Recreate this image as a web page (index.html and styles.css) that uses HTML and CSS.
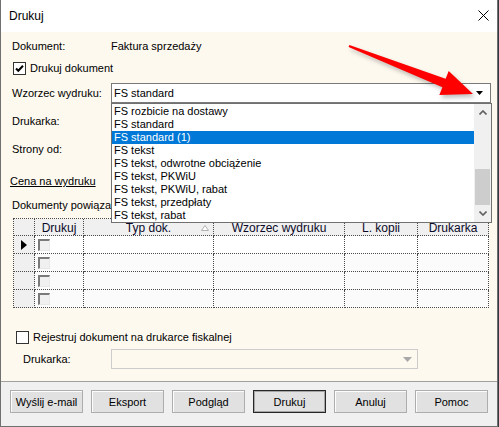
FILE: index.html
```html
<!DOCTYPE html>
<html>
<head>
<meta charset="utf-8">
<link rel="stylesheet" href="styles.css">
</head>
<body>
<div class="window">
  <div class="titlebar">
    <span class="title">Drukuj</span>
    <svg class="close" width="11" height="11" viewBox="0 0 11 11"><path d="M0.5 0.5 L10.5 10.5 M10.5 0.5 L0.5 10.5" stroke="#000" stroke-width="1" fill="none"/></svg>
  </div>
  <div class="content">
    <div class="row r1"><span class="label">Dokument:</span><span>Faktura sprzedaży</span></div>
    <div class="row r2"><span class="chk"><svg width="11" height="11" viewBox="0 0 11 11"><path d="M2 5.5 L4.3 7.8 L9 2.8" stroke="#000" stroke-width="2" fill="none"/></svg></span><span>Drukuj dokument</span></div>
    <div class="row r3"><span class="label">Wzorzec wydruku:</span>
      <div class="combo"><span class="combo-text">FS standard</span><svg class="carrow" width="7" height="4" viewBox="0 0 7 4"><path d="M0 0 H7 L3.5 4 Z" fill="#000"/></svg></div>
    </div>
    <div class="row r4"><span class="label">Drukarka:</span></div>
    <div class="row r5"><span class="label">Strony od:</span></div>
    <div class="row r6"><span class="link">Cena na wydruku</span></div>
    <div class="row r7"><span>Dokumenty powiązane</span></div>
    <div class="grid">
      <div class="grow head">
        <div class="cell rh"></div>
        <div class="cell hc">Drukuj</div>
        <div class="cell hc sort">Typ dok.<svg class="sorttri" width="8" height="6" viewBox="0 0 8 6"><path d="M0.5 5.5 L4 0.5 L7.5 5.5 Z" fill="#fff" stroke="#b0b0b0" stroke-width="1"/></svg></div>
        <div class="cell hc">Wzorzec wydruku</div>
        <div class="cell hc">L. kopii</div>
        <div class="cell hc">Drukarka</div>
      </div>
      <div class="grow first">
        <div class="cell rh"><svg class="ind" width="6" height="10" viewBox="0 0 6 10"><path d="M0 0 L6 5 L0 10 Z" fill="#000"/></svg></div>
        <div class="cell"><span class="gchk"></span></div>
        <div class="cell"></div><div class="cell"></div><div class="cell"></div><div class="cell"></div>
      </div>
      <div class="grow">
        <div class="cell rh"></div>
        <div class="cell"><span class="gchk"></span></div>
        <div class="cell"></div><div class="cell"></div><div class="cell"></div><div class="cell"></div>
      </div>
      <div class="grow">
        <div class="cell rh"></div>
        <div class="cell"><span class="gchk"></span></div>
        <div class="cell"></div><div class="cell"></div><div class="cell"></div><div class="cell"></div>
      </div>
      <div class="grow">
        <div class="cell rh"></div>
        <div class="cell"><span class="gchk"></span></div>
        <div class="cell"></div><div class="cell"></div><div class="cell"></div><div class="cell"></div>
      </div>
    </div>
    <div class="row r8"><span class="chk"></span><span>Rejestruj dokument na drukarce fiskalnej</span></div>
    <div class="row r9"><span class="label2">Drukarka:</span>
      <div class="combo disabled"><svg class="carrow" width="9" height="5" viewBox="0 0 9 5"><path d="M0 0 H9 L4.5 5 Z" fill="#a8a8a8"/></svg></div>
    </div>
  </div>
  <div class="buttons">
    <button class="btn">Wyślij e-mail</button>
    <button class="btn">Eksport</button>
    <button class="btn">Podgląd</button>
    <button class="btn default">Drukuj</button>
    <button class="btn">Anuluj</button>
    <button class="btn">Pomoc</button>
  </div>
  <div class="dropdown">
    <div class="items">
      <div class="item">FS rozbicie na dostawy</div>
      <div class="item">FS standard</div>
      <div class="item sel">FS standard (1)</div>
      <div class="item">FS tekst</div>
      <div class="item">FS tekst, odwrotne obciążenie</div>
      <div class="item">FS tekst, PKWiU</div>
      <div class="item">FS tekst, PKWiU, rabat</div>
      <div class="item">FS tekst, przedpłaty</div>
      <div class="item">FS tekst, rabat</div>
    </div>
    <div class="scrollbar">
      <div class="sbtn"><svg width="8" height="5" viewBox="0 0 8 5"><path d="M0.5 4.5 L4 1 L7.5 4.5" stroke="#606060" stroke-width="1.6" fill="none"/></svg></div>
      <div class="track"><div class="thumb"></div></div>
      <div class="sbtn"><svg width="8" height="5" viewBox="0 0 8 5"><path d="M0.5 0.5 L4 4 L7.5 0.5" stroke="#606060" stroke-width="1.6" fill="none"/></svg></div>
    </div>
  </div>
</div>
<svg class="redarrow" width="499" height="427" viewBox="0 0 499 427">
  <polygon points="349.4,45.1 445.6,78.8 448.7,70.9 473,94 439.3,95.1 442.4,87.2 348.6,46.9" fill="#ff0000"/>
</svg>
</body>
</html>
```
FILE: styles.css
```css
html, body {
  margin: 0;
  padding: 0;
}
body {
  background: #34393f;
  font-family: "Liberation Sans", Arial, sans-serif;
  font-size: 11px;
  color: #000;
  width: 499px;
  height: 427px;
  overflow: hidden;
  position: relative;
}
.window {
  position: relative;
  width: 498px;
  height: 427px;
  box-sizing: border-box;
  border-left: 1px solid #707070;
  border-right: 1px solid #707070;
  border-bottom: 1px solid #707070;
  background: #f0f0f0;
}
.titlebar {
  height: 32px;
  background: #fff;
  display: flex;
  align-items: center;
  padding-left: 8px;
  box-sizing: border-box;
}
.title {
  font-size: 12px;
  margin-top: -1px;
}
.close {
  margin-left: auto;
  margin-right: 8px;
  margin-top: -1px;
}
.content {
  height: 350px;
  box-sizing: border-box;
  background: #fdf9ef;
  padding: 4px 0 0 11px;
  border-bottom: 1px solid #a0a0a0;
}
.row {
  display: flex;
  align-items: center;
  height: 20px;
  white-space: nowrap;
}
.label {
  width: 99px;
  flex: none;
}
.r2 { margin-top: 2px; padding-left: 1px; }
.r3 { margin-top: 5px; }
.r4 { margin-top: 8px; }
.r5 { margin-top: 8px; }
.r6 { margin-top: 12px; margin-left: -2px; }
.r7 { margin-top: 4px; }
.r8 { margin-top: 19px; padding-left: 4px; }
.r9 { margin-top: 2px; padding-left: 11px; }
.label2 {
  width: 88px;
  flex: none;
}
.link {
  text-decoration: underline;
}
.chk {
  width: 13px;
  height: 13px;
  box-sizing: border-box;
  border: 1px solid #333;
  background: #fff;
  margin-right: 4px;
  display: flex;
  align-items: center;
  justify-content: center;
  flex: none;
}
.combo {
  width: 380px;
  height: 20px;
  box-sizing: border-box;
  border: 1px solid #7a7a7a;
  background: #fff;
  display: flex;
  align-items: center;
  padding-left: 2px;
}
.combo-text {
  font-size: 11px;
}
.carrow {
  margin-left: auto;
  margin-right: 7px;
}
.combo.disabled {
  width: 307px;
  border-color: #cccccc;
  background: #fdf9ef;
}
.combo.disabled .carrow {
  margin-right: 5px;
}
.grid {
  margin-top: 3px;
  margin-left: 1px;
  width: 476px;
  box-sizing: border-box;
  border-top: 1px dotted #4a4a4a;
  border-left: 1px dotted #4a4a4a;
}
.grow {
  display: grid;
  grid-template-columns: 21px 49px 130px 131px 73px 71px;
  height: 18px;
  background: #fbfbfb;
}
.grow.first {
  background: #fff;
}
.grow.head {
  height: 17px;
  background: #f0f0f0;
}
.cell {
  box-sizing: border-box;
  border-right: 1px dotted #4a4a4a;
  border-bottom: 1px dotted #4a4a4a;
  display: flex;
  align-items: center;
  padding-left: 3px;
}
.cell.rh {
  background: #f0f0f0;
  padding-left: 7px;
}
.hc {
  justify-content: center;
  padding-left: 0;
  font-size: 12px;
  padding-top: 2px;
  color: #0a0a28;
}
.sort {
  position: relative;
}
.sorttri {
  position: absolute;
  right: 4px;
  top: 6px;
}
.gchk {
  width: 12px;
  height: 12px;
  box-sizing: border-box;
  border-top: 2px solid #7a7a7a;
  border-left: 2px solid #7a7a7a;
  border-right: 1px solid #e8e8e8;
  border-bottom: 1px solid #e8e8e8;
  background: #f0f0f0;
}
.buttons {
  display: flex;
  gap: 8px;
  padding: 8px 0 0 9px;
}
.btn {
  width: 73px;
  height: 23px;
  box-sizing: border-box;
  border: 1px solid #adadad;
  background: #e1e1e1;
  font-family: "Liberation Sans", Arial, sans-serif;
  font-size: 11px;
  color: #000;
  padding: 0;
  margin: 0;
  box-shadow: inset 1px 1px #fdfdfd;
}
.btn.default {
  border: 1px solid #262626;
  box-shadow: inset 0 0 0 1px #a6a6a6;
}
.dropdown {
  position: absolute;
  left: 110px;
  top: 103px;
  width: 381px;
  height: 120px;
  box-sizing: border-box;
  border: 1px solid #707070;
  background: #fff;
  display: flex;
  z-index: 2;
}
.items {
  flex: 1;
  padding-top: 1px;
}
.item {
  height: 13px;
  line-height: 13px;
  padding-left: 2px;
  white-space: nowrap;
}
.item.sel {
  background: #0078d7;
  color: #fff;
}
.scrollbar {
  width: 17px;
  flex: none;
  background: #f0f0f0;
  display: flex;
  flex-direction: column;
}
.sbtn {
  height: 17px;
  display: flex;
  align-items: center;
  justify-content: center;
}
.track {
  flex: 1;
  padding: 48px 1px 0 1px;
}
.thumb {
  height: 36px;
  background: #cdcdcd;
}
.redarrow {
  position: absolute;
  left: 0;
  top: 0;
  z-index: 3;
  pointer-events: none;
  filter: drop-shadow(2px 3px 2px rgba(0, 0, 0, 0.25));
}
```
